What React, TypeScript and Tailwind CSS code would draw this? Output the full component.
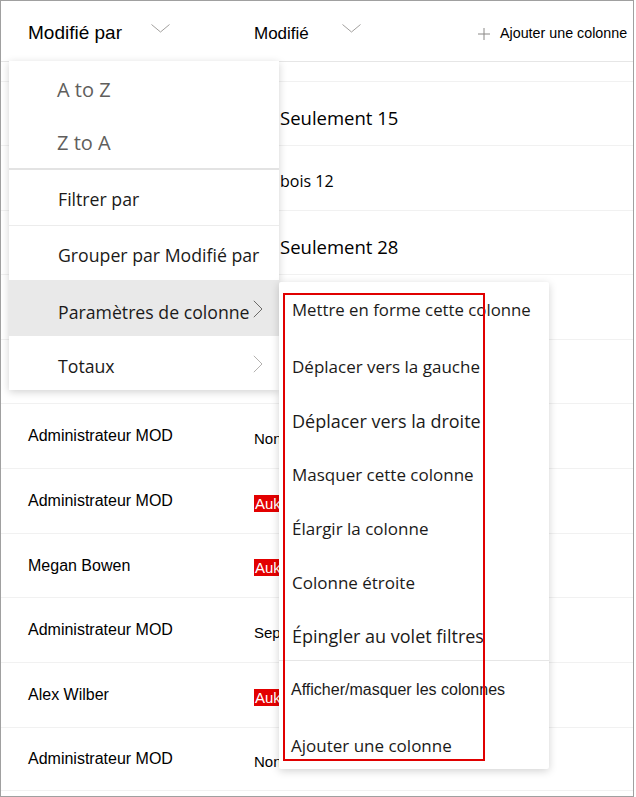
import React from "react";

const HeaderChevron = () => (
  <svg width="19" height="9" viewBox="0 0 19 9" className="block">
    <path d="M0.5 0.5 L9.5 8 L18.5 0.5" fill="none" stroke="#a19f9d" strokeWidth="1" />
  </svg>
);

const RightChevron = ({ color }: { color: string }) => (
  <svg width="10" height="18" viewBox="0 0 10 18" className="block">
    <path d="M0.8 0.8 L9 9 L0.8 17.2" fill="none" stroke={color} strokeWidth="1" />
  </svg>
);

type Row = { h: string; name?: string; val?: React.ReactNode };

const menuFont = { fontFamily: '"Open Sans", "Noto Sans", sans-serif' };
const tableFont = { fontFamily: '"Liberation Sans", Arial, sans-serif' };

const Auk = () => (
  <span className="bg-[#e30000] text-white px-[1px] text-[15px] leading-[16px]">Auk</span>
);

export default function App() {
  const rows: Row[] = [
    { h: "h-[20px]" },
    {
      h: "h-[64px]",
      val: (
        <span className="pl-[279px] pt-[8px] text-[18.5px] text-black" style={menuFont}>
          Seulement 15
        </span>
      ),
    },
    {
      h: "h-[65px]",
      val: (
        <span className="pl-[279px] pt-[5px] text-[16px] text-black" style={menuFont}>
          bois 12
        </span>
      ),
    },
    {
      h: "h-[64px]",
      val: (
        <span className="pl-[279px] pt-[8px] text-[18.5px] text-black" style={menuFont}>
          Seulement 28
        </span>
      ),
    },
    { h: "h-[65px]" },
    { h: "h-[64px]" },
    { h: "h-[65px]", name: "Administrateur MOD", val: <span className="text-[15px]">Non</span> },
    { h: "h-[65px]", name: "Administrateur MOD", val: <Auk /> },
    { h: "h-[64px]", name: "Megan Bowen", val: <Auk /> },
    { h: "h-[65px]", name: "Administrateur MOD", val: <span className="text-[15px]">Sep</span> },
    { h: "h-[65px]", name: "Alex Wilber", val: <Auk /> },
    { h: "h-[63px]", name: "Administrateur MOD", val: <span className="text-[15px]">Non</span> },
  ];

  const subItems: { label: string; cls: string; size: string }[] = [
    { label: "Mettre en forme cette colonne", cls: "h-[54px] pb-[6px]", size: "text-[16.8px]" },
    { label: "Déplacer vers la gauche", cls: "h-[54px]", size: "text-[17px]" },
    { label: "Déplacer vers la droite", cls: "h-[54px]", size: "text-[18px]" },
    { label: "Masquer cette colonne", cls: "h-[54px]", size: "text-[17px]" },
    { label: "Élargir la colonne", cls: "h-[54px]", size: "text-[17px]" },
    { label: "Colonne étroite", cls: "h-[54px]", size: "text-[17px]" },
    { label: "Épingler au volet filtres", cls: "h-[50px] pt-[2px]", size: "text-[18px]" },
  ];

  return (
    <div className="w-[636px] h-[797px] bg-white overflow-hidden">
      <div className="relative w-[634px] h-[797px] border border-[#a0a0a0] bg-white overflow-hidden">
        {/* Header */}
        <div className="h-[61px] border-b border-[#e6e6e6] flex items-center" style={tableFont}>
          <div className="w-[253px] pl-[27px] flex items-center">
            <span className="text-[19px] text-black pt-[4px]">Modifié par</span>
            <span className="ml-[29px] -mt-[6px]">
              <HeaderChevron />
            </span>
          </div>
          <div className="w-[224px] flex items-center">
            <span className="text-[17px] text-black pt-[5px]">Modifié</span>
            <span className="ml-[33px] -mt-[6px]">
              <HeaderChevron />
            </span>
          </div>
          <div className="flex items-center pt-[5px]">
            <svg width="12" height="12" viewBox="0 0 12 12" className="block">
              <path d="M6 0 V12 M0 6 H12" stroke="#8a8886" strokeWidth="1" />
            </svg>
            <span className="ml-[10px] text-[14.3px] text-black">Ajouter une colonne</span>
          </div>
        </div>

        {/* Rows */}
        <div style={tableFont}>
          {rows.map((r, i) => (
            <div key={i} className={`${r.h} border-b border-[#f1f1f1] flex items-center`}>
              {r.name ? (
                <>
                  <div className="w-[253px] pl-[27px] text-[16px] text-black">{r.name}</div>
                  <div className="pt-[5px] text-black">{r.val}</div>
                </>
              ) : (
                <div className="flex">{r.val}</div>
              )}
            </div>
          ))}
        </div>

        {/* Left dropdown menu */}
        <div
          className="absolute left-[8px] top-[60px] w-[270px] bg-white shadow-[0_2px_8px_rgba(0,0,0,0.18)] flex flex-col"
          style={menuFont}
        >
          <div className="h-[57px] flex items-center pl-[48px] text-[20px] text-[#605e5c]">A to Z</div>
          <div className="h-[50px] flex items-center pl-[48px] text-[20px] text-[#605e5c]">Z to A</div>
          <div className="h-[2px] bg-[#e3e3e3]" />
          <div className="h-[55px] flex items-center pl-[49px] pt-[4px] text-[17.7px] text-[#1b1a19]">Filtrer par</div>
          <div className="h-[1px] bg-[#ececec]" />
          <div className="h-[54px] flex items-center pl-[49px] pt-[5px] text-[17.7px] text-[#1b1a19]">
            Grouper par Modifié par
          </div>
          <div className="h-[56px] flex items-center pl-[49px] pt-[8px] bg-[#e9e9e9] text-[17.7px] text-[#1b1a19] relative">
            Paramètres de colonne
            <span className="absolute left-[244px] top-[20px]">
              <RightChevron color="#6b6a68" />
            </span>
          </div>
          <div className="h-[54px] flex items-center pl-[49px] pt-[7px] text-[17.7px] text-[#1b1a19] relative">
            Totaux
            <span className="absolute left-[244px] top-[19px]">
              <RightChevron color="#b3b1af" />
            </span>
          </div>
        </div>

        {/* Submenu */}
        <div
          className="absolute left-[278px] top-[281px] w-[270px] h-[487px] bg-white rounded-[2px] shadow-[0_2px_8px_rgba(0,0,0,0.18)] flex flex-col pt-[4px]"
          style={menuFont}
        >
          {subItems.map((s) => (
            <div key={s.label} className={`${s.cls} flex items-center pl-[13px] ${s.size} text-[#1b1a19]`}>
              {s.label}
            </div>
          ))}
          <div className="h-[1px] bg-[#e6e6e6]" />
          <div className="h-[58px] flex items-center pl-[12px] text-[16px] text-[#1b1a19]" style={tableFont}>
            Afficher/masquer les colonnes
          </div>
          <div className="h-[49px] flex items-center pl-[12px] pt-[5px] text-[17px] text-[#1b1a19]">
            Ajouter une colonne
          </div>
        </div>

        {/* Red highlight rectangle */}
        <div className="absolute left-[282px] top-[292px] w-[202px] h-[468px] border-2 border-[#e00000] pointer-events-none" />
      </div>
    </div>
  );
}
